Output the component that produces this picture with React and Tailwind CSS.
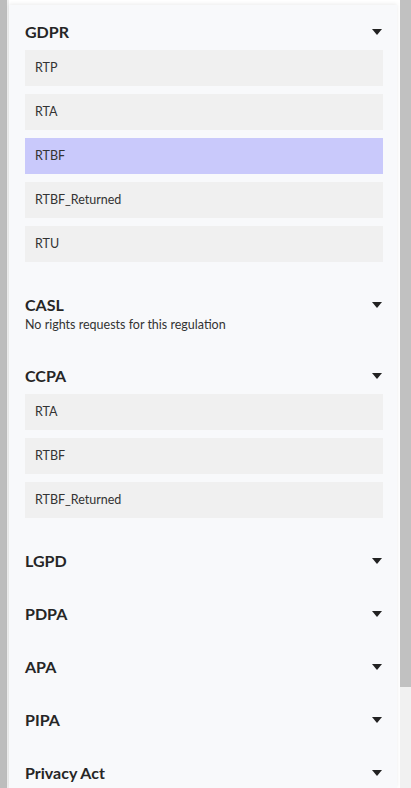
import React from "react";

const sections = [
  { name: "GDPR", items: ["RTP", "RTA", "RTBF", "RTBF_Returned", "RTU"], selected: "RTBF" },
  { name: "CASL", empty: true },
  { name: "CCPA", items: ["RTA", "RTBF", "RTBF_Returned"] },
  { name: "LGPD" },
  { name: "PDPA" },
  { name: "APA" },
  { name: "PIPA" },
  { name: "Privacy Act" },
  { name: "PIPEDA" },
];

function Caret() {
  return (
    <svg width="10" height="6" viewBox="0 0 10 6" className="mr-[1px]">
      <path d="M0 0 L10 0 L5 6 Z" fill="#222" />
    </svg>
  );
}

export default function App() {
  return (
    <div
      className="flex h-[788px] w-[411px] overflow-hidden bg-white"
      style={{ fontFamily: "Lato, 'Open Sans', sans-serif" }}
    >
      <div className="w-[7px] shrink-0 bg-[#bdbdbd]" />
      <div className="w-[2px] shrink-0 bg-[#efefef]" />
      <div className="flex-1 pt-[5px] pr-[3px] bg-white">
        <div className="h-full bg-[#f8f9fb] pl-4 pr-[14px] pt-[15px] shadow-[0_-1px_4px_rgba(0,0,0,0.08)] overflow-hidden">
          <div className="flex flex-col gap-[29px]">
            {sections.map((s) => (
              <div key={s.name} className="flex flex-col">
                <div className="flex h-6 items-center justify-between">
                  <span className="text-[16px] font-bold text-[#262626] leading-6">{s.name}</span>
                  <Caret />
                </div>
                {s.empty && (
                  <div className="text-[12.5px] leading-4 text-[#333] mb-[2px]">
                    No rights requests for this regulation
                  </div>
                )}
                {s.items && (
                  <div className="mt-[6px] mb-[2px] flex flex-col gap-2">
                    {s.items.map((it) => (
                      <div
                        key={it}
                        className={
                          "flex h-[36px] items-center pl-[10px] text-[12.5px] text-[#333] " +
                          (it === s.selected ? "bg-[#c9c9fb]" : "bg-[#f0f0f0]")
                        }
                      >
                        {it}
                      </div>
                    ))}
                  </div>
                )}
              </div>
            ))}
          </div>
        </div>
      </div>
      <div className="flex w-[11px] shrink-0 flex-col">
        <div className="h-[687px] bg-[#c1c1c1]" />
        <div className="flex-1 bg-[#f1f1f1]" />
      </div>
    </div>
  );
}
